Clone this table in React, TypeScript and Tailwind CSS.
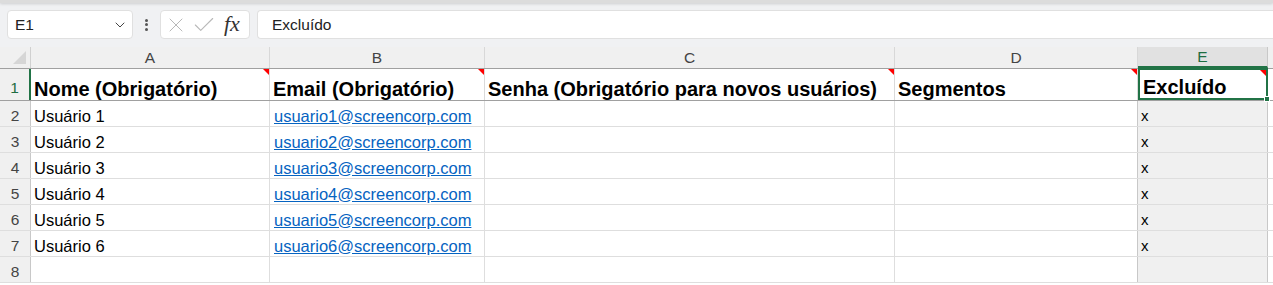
import { ChevronDown, X, Check } from 'lucide-react';

const columns = [
  { key: 'A', width: 'w-[239px]' },
  { key: 'B', width: 'w-[215px]' },
  { key: 'C', width: 'w-[410px]' },
  { key: 'D', width: 'w-[243px]' },
  { key: 'E', width: 'w-[130px]' },
];

const headers = [
  'Nome (Obrigatório)',
  'Email (Obrigatório)',
  'Senha (Obrigatório para novos usuários)',
  'Segmentos',
  'Excluído',
];

const users = [1, 2, 3, 4, 5, 6].map((n) => ({
  name: `Usuário ${n}`,
  email: `usuario${n}@screencorp.com`,
}));

const CommentMark = () => (
  <span className="absolute right-0 top-0 w-0 h-0 border-t-[6px] border-l-[6px] border-t-[#ff0000] border-l-transparent" />
);

const FormulaBar = () => (
  <div className="h-[47px] bg-[#f0f1f3] relative">
    <div className="h-[3px] bg-[#dcdcdc] shadow-[0_1px_3px_rgba(0,0,0,0.15)]" />
    <div className="flex items-start pt-[7px] pl-[7px]">
      <div className="w-[126px] h-[29px] bg-white border border-[#e0e0e0] rounded-[4px] flex items-center justify-between pl-[7px] pr-[4px] font-['Liberation_Sans',sans-serif] text-[15.5px] text-[#222]">
        <span>E1</span>
        <ChevronDown size={16} strokeWidth={1.5} className="text-[#444]" />
      </div>
      <div className="w-[27px] h-[29px] flex flex-col items-center justify-center gap-[1.5px]">
        <span className="w-[3px] h-[3px] rounded-full bg-[#555]" />
        <span className="w-[3px] h-[3px] rounded-full bg-[#555]" />
        <span className="w-[3px] h-[3px] rounded-full bg-[#555]" />
      </div>
      <div className="w-[90px] h-[29px] bg-white border border-[#e0e0e0] rounded-[4px] flex items-center pl-[3px] gap-[3px]">
        <X size={24} strokeWidth={1} className="text-[#b8b8b8]" />
        <Check size={26} strokeWidth={1} className="text-[#b8b8b8]" />
        <span className="font-['Liberation_Serif',serif] italic text-[22px] text-[#333] leading-none ml-[4px] -mt-[2px]">fx</span>
      </div>
      <div className="flex-1 ml-[7px] h-[29px] bg-white border border-[#e0e0e0] border-r-0 rounded-l-[4px] flex items-center pl-[14px] font-['Liberation_Sans',sans-serif] text-[15.5px] text-[#222]">
        Excluído
      </div>
    </div>
  </div>
);

const RowHeader = ({ n, active }: { n: number; active?: boolean }) => (
  <div
    className={`w-[31px] shrink-0 bg-[#f0f0f0] border-r border-[#c8c8c8] flex items-end justify-center pb-[3px] text-[15.5px] leading-none ${
      active ? 'text-[#1e6e42] border-r-2 border-r-[#217346] pb-[5px]' : 'text-[#444]'
    }`}
  >
    {n}
  </div>
);

export default function App() {
  return (
    <div className="w-[1273px] h-[285px] overflow-hidden bg-white font-['Liberation_Sans',sans-serif]">
      <FormulaBar />

      {/* column letters */}
      <div className="flex h-[22px] bg-[#f0f0f0] border-b border-[#a0a0a0]">
        <div className="w-[31px] shrink-0 border-r border-[#d0d0d0] relative">
          <span className="absolute right-[4px] bottom-[4px] w-0 h-0 border-b-[13px] border-l-[13px] border-b-[#d6d6d6] border-l-transparent" />
        </div>
        {columns.map((c) => (
          <div
            key={c.key}
            className={`${c.width} shrink-0 border-r border-[#d8d8d8] flex items-center justify-center text-[15.5px] ${
              c.key === 'E' ? 'bg-[#e1e1e1] text-[#1e6e42] border-b-2 border-b-[#217346] border-r-[#c8c8c8]' : 'text-[#444]'
            }`}
          >
            {c.key}
          </div>
        ))}
        <div className="flex-1" />
      </div>

      {/* row 1: bold titles */}
      <div className="flex h-[32px] border-b border-[#a0a0a0]">
        <RowHeader n={1} active />
        {columns.map((c, i) => (
          <div
            key={c.key}
            className={`${c.width} shrink-0 relative flex items-end pl-[3px] pb-[1px] font-bold text-[20px] text-black leading-none whitespace-nowrap ${
              c.key === 'E' ? 'border-2 border-[#217346] -mt-px pl-[2px] pb-0' : 'border-r border-[#dadada]'
            }`}
          >
            <span>{headers[i]}</span>
            <CommentMark />
            {c.key === 'E' && (
              <span className="absolute -right-[4px] -bottom-[4px] w-[6px] h-[6px] bg-[#217346] border border-white" />
            )}
          </div>
        ))}
        <div className="flex-1" />
      </div>

      {/* data rows */}
      {users.map((u, idx) => (
        <div key={u.email} className="flex h-[26px] border-b border-[#dedede]">
          <RowHeader n={idx + 2} />
          <div className="w-[239px] shrink-0 border-r border-[#dedede] flex items-end pl-[3px] pb-[2px] text-[16.5px] leading-none text-black whitespace-nowrap">
            {u.name}
          </div>
          <div className="w-[215px] shrink-0 border-r border-[#dedede] flex items-end pl-[4px] pb-[2px] text-[16.5px] leading-none text-[#0563c1] underline whitespace-nowrap">
            {u.email}
          </div>
          <div className="w-[410px] shrink-0 border-r border-[#dedede]" />
          <div className="w-[243px] shrink-0 border-r border-[#c8c8c8]" />
          <div className="w-[130px] shrink-0 border-r border-[#c8c8c8] bg-[#f0f0f0] flex items-end pl-[3px] pb-[3px] text-[15px] leading-none text-black">
            x
          </div>
          <div className="flex-1" />
        </div>
      ))}

      {/* empty row 8 */}
      <div className="flex h-[26px] border-b border-[#dedede]">
        <RowHeader n={8} />
        <div className="w-[239px] shrink-0 border-r border-[#dedede]" />
        <div className="w-[215px] shrink-0 border-r border-[#dedede]" />
        <div className="w-[410px] shrink-0 border-r border-[#dedede]" />
        <div className="w-[243px] shrink-0 border-r border-[#c8c8c8]" />
        <div className="w-[130px] shrink-0 border-r border-[#c8c8c8] bg-[#f0f0f0]" />
        <div className="flex-1" />
      </div>
    </div>
  );
}
